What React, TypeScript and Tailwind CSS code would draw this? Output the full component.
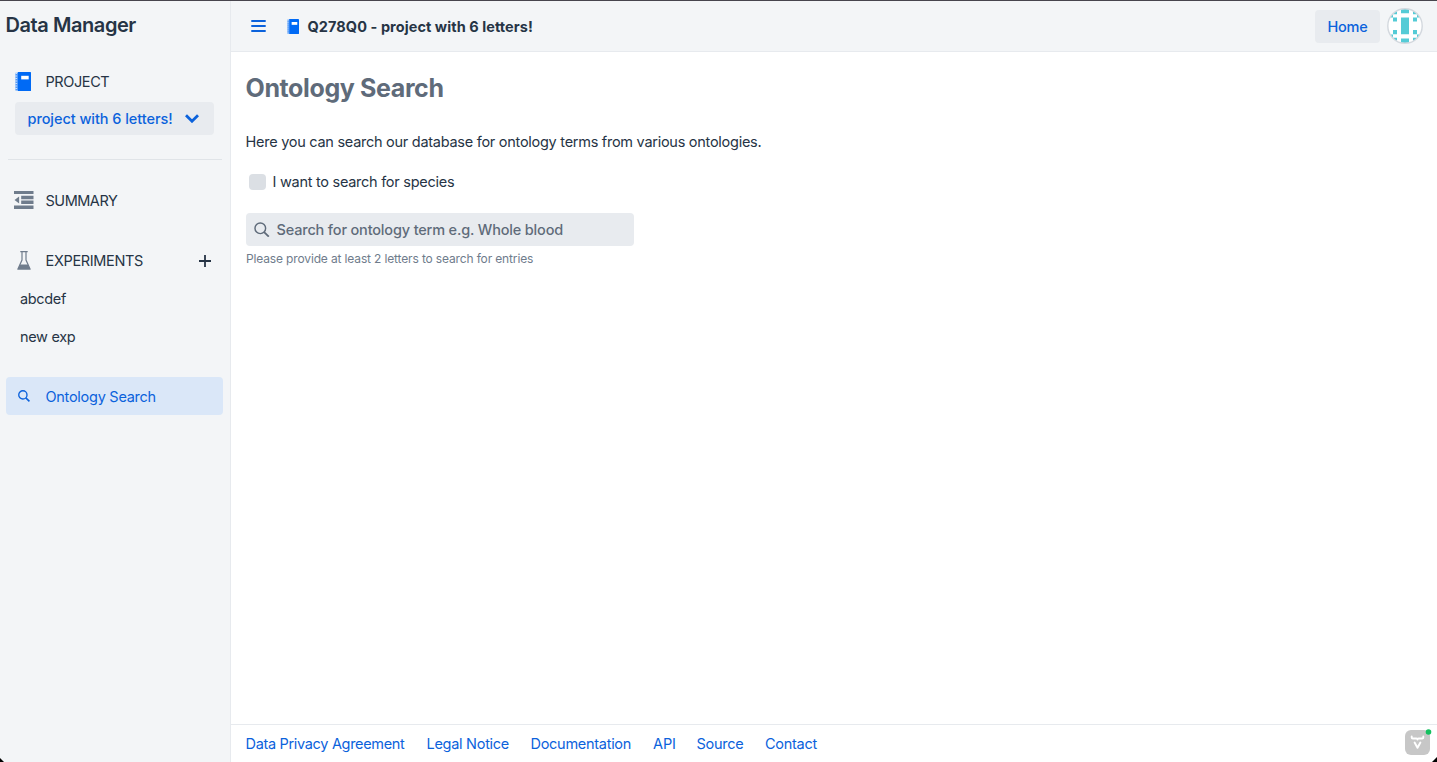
import React from "react";

function Notebook({ className }: { className: string }) {
  return (
    <svg viewBox="0 0 16 19" className={className} fill="#006af5" preserveAspectRatio="none">
      <path d="M2.800 0H15.500a.5.5 0 0 1 .5.5v18a.5.5 0 0 1-.5.5H2.800z" />
      <path d="M.4 .8h2.600v17.700H.4z" fill="#4f98f8" />
      <path d="M1.200 1v17.500" stroke="#cfe2fb" strokeWidth="1.800" strokeDasharray="1.100 1.400" fill="none" />
      <path fill="#fff" d="M6.200 3.800h7.500v3.600H6.200z" />
    </svg>
  );
}

function SearchIcon({ className, thick = 1.5 }: { className: string; thick?: number }) {
  return (
    <svg viewBox="0 0 16 16" className={className} fill="none" stroke="currentColor">
      <circle cx="6.5" cy="6.5" r="5.5" strokeWidth={thick} />
      <path d="M10.400 10.400l4.900 4.700" strokeWidth={thick + 0.4} />
    </svg>
  );
}

function Avatar() {
  return (
    <svg viewBox="0 0 36 36" className="h-9 w-9">
      <defs>
        <clipPath id="round"><circle cx="18" cy="18" r="17" /></clipPath>
      </defs>
      <circle cx="18" cy="18" r="17.2" fill="#fff" />
      <g clipPath="url(#round)" fill="#54cbd6">
        <path d="M14 1h8v4.200h-8zM14 9.500h8v16.800h-8zM14 30.600h8V35h-8z" />
        <path d="M5 1h5v5.200H6v3.200H1V5.200zM6 9.400h4v4.200H6zM6 22h4v4.200H6zM1 26.400h5v3.400h4V35H5z" />
        <path d="M31 1h-5v5.200h4v3.200h5V5.200zM26 9.400h4v4.200h-4zM26 22h4v4.200h-4zM35 26.400h-5v3.400h-4V35h5z" />
      </g>
      <circle cx="18" cy="18" r="17.2" fill="none" stroke="#d3d8de" strokeWidth="1.4" />
    </svg>
  );
}

function Sidebar() {
  return (
    <aside className="flex w-[231px] shrink-0 flex-col border-r border-[#e7eaee] bg-[#f3f5f7]">
      <h1 className="mt-[9px] pl-[5.5px] text-[20px] leading-[30px] font-semibold tracking-[-0.43px] whitespace-nowrap">Data Manager</h1>
      <div className="mt-[30px] flex h-[22px] items-center pl-[15px]">
        <Notebook className="h-[19px] w-4" />
        <span className="relative top-px ml-[14.500px] tracking-[-0.4px]">PROJECT</span>
      </div>
      <button className="mt-[10px] ml-[14.500px] flex h-[33px] w-[199.500px] items-center rounded-[4px] bg-[#e8ebef] pl-[13px] font-medium text-[#0b62dc]">
        <span className="w-[157px] text-left tracking-[-0.06px] whitespace-nowrap">project with 6 letters!</span>
        <svg viewBox="0 0 14 9" className="h-[9px] w-[14px]" fill="none" stroke="currentColor" strokeWidth="2.800">
          <path d="M1 1.200l6 6 6-6" />
        </svg>
      </button>
      <div className="mt-[24px] ml-2 h-px w-[213.500px] bg-[#e0e4e8]" />
      <div className="mt-[30px] flex h-[22px] items-center pl-[14px]">
        <svg viewBox="0 0 19 18" className="relative -top-px h-[18px] w-[19.500px]" fill="#6f7c8c" preserveAspectRatio="none">
          <path d="M0 0h19v3H0zM7 4.800h12v3.400H7zM7 9.600h12V13H7zM0 14.600h19V18H0zM5 5.500v7L.5 9z" />
        </svg>
        <span className="ml-[12px] tracking-[-0.48px]">SUMMARY</span>
      </div>
      <div className="mt-[38px] flex h-[22px] items-center pl-[17px]">
        <svg viewBox="0 0 14 19" className="relative -top-px h-[19px] w-[14px]" fill="none" stroke="#6f7c8c">
          <path d="M3.300.6h7.400M5 1v8L1 17.800h12L9 9V1" strokeWidth="1.200" />
          <path d="M3 13.400h8l2.400 5.100H.6z" fill="#6f7c8c" stroke="none" />
        </svg>
        <span className="ml-[14.500px] w-[153px] tracking-[-0.33px]">EXPERIMENTS</span>
        <svg viewBox="0 0 12 12" className="h-3 w-3" stroke="#263445" strokeWidth="1.800">
          <path d="M6 0v12M0 6h12" />
        </svg>
      </div>
      <a className="mt-[16px] pl-5 leading-[22px] tracking-[-0.33px]">abcdef</a>
      <a className="mt-[16px] pl-5 leading-[22px] tracking-[-0.33px]">new exp</a>
      <a className="mt-[29px] ml-[5.500px] flex h-[38px] w-[217.500px] items-center rounded-[4px] bg-[#dae7f8] pl-3 text-[#0b62dc]">
        <SearchIcon className="h-3 w-3" thick={1.8} />
        <span className="ml-4 pt-px tracking-[-0.27px]">Ontology Search</span>
      </a>
    </aside>
  );
}

function Header() {
  return (
    <header className="flex h-[51px] shrink-0 items-center border-b border-[#e7eaee] bg-[#f3f5f7] pl-5">
      <svg viewBox="0 0 15 12" className="h-3 w-[15px]" stroke="#0b62dc" strokeWidth="1.900" strokeLinecap="round">
        <path d="M1 1h13M1 6h13M1 11h13" />
      </svg>
      <Notebook className="ml-[21px] h-[15px] w-3" />
      <h2 className="ml-[8.500px] pt-px font-bold tracking-[0.07px] whitespace-nowrap">Q278Q0 - project with 6 letters!</h2>
      <button className="ml-auto h-[33px] w-[65px] rounded-[4px] bg-[#e8ebef] pt-px font-medium tracking-[-0.2px] text-[#0b62dc]">Home</button>
      <div className="mr-[14px] ml-[7px]"><Avatar /></div>
    </header>
  );
}

function Footer() {
  return (
    <footer className="relative flex h-[38px] shrink-0 items-center border-t border-[#e7eaee] pt-px pl-[14.500px] tracking-[-0.28px] whitespace-nowrap text-[#0b62dc]">
      <a className="w-[181px] tracking-[-0.32px]">Data Privacy Agreement</a>
      <a className="w-[104px]">Legal Notice</a>
      <a className="w-[122.500px]">Documentation</a>
      <a className="w-[43.500px] tracking-[-0.1px]">API</a>
      <a className="w-[68.500px]">Source</a>
      <a>Contact</a>
      <svg viewBox="0 0 29 28" className="absolute right-[4px] bottom-[6px] h-7 w-[29px]">
        <rect x="1" y="2" width="25" height="25" rx="6" fill="#c7c7c7" />
        <path d="M7.700 8.500v1q0 1 1.200 1h3.500q1.100 0 1.100 1.100 0-1.100 1.100-1.100h3.500q1.200 0 1.200-1v-1M10.600 14.500l2.900 5.300 2.900-5.300" fill="none" stroke="#fff" strokeWidth="1.900" strokeLinecap="round" strokeLinejoin="round" />
        <circle cx="24.500" cy="4" r="2.800" fill="#14c05f" />
      </svg>
    </footer>
  );
}

export default function App() {
  return (
    <div className="relative flex h-[762px] w-full flex-col overflow-hidden border-t border-[#47454d] bg-white font-['Inter',sans-serif] text-[14.500px] text-[#263445]">
      <div className="flex min-h-0 grow">
        <Sidebar />
        <div className="flex min-w-0 grow flex-col">
          <Header />
          <main className="flex grow flex-col items-start pl-[14.500px]">
            <h2 className="mt-[18px] text-[25px] leading-[36px] font-bold tracking-[-0.38px] text-[#5f6b7a]">Ontology Search</h2>
            <p className="mt-[25px] leading-[22px] tracking-[-0.268px]">Here you can search our database for ontology terms from various ontologies.</p>
            <label className="mt-[18px] flex h-[22px] items-center">
              <span className="ml-[3.500px] h-4 w-[17px] rounded-[4px] bg-[#dbdfe4]" />
              <span className="ml-[6.500px] tracking-[-0.27px]">I want to search for species</span>
            </label>
            <div className="mt-[20px] flex h-[33px] w-[388.500px] items-center rounded-[4px] bg-[#e8ebef] pl-[8.500px] font-medium text-[#5f6b7a]">
              <SearchIcon className="h-[15.5px] w-[15.5px]" />
              <span className="ml-[7px] tracking-[-0.17px]">Search for ontology term e.g. Whole blood</span>
            </div>
            <p className="mt-[4px] pl-[0.500px] text-[12px] leading-[18px] tracking-[-0.145px] text-[#6f7c8c]">Please provide at least 2 letters to search for entries</p>
          </main>
          <Footer />
        </div>
      </div>
      <svg viewBox="0 0 5 5" className="absolute bottom-0 left-0 h-[5px] w-[5px]"><path d="M0 1l4 4H0z" fill="#000" /></svg>
      <svg viewBox="0 0 5 5" className="absolute right-0 bottom-0 h-[5px] w-[5px]"><path d="M5 0v5H0z" fill="#000" /></svg>
    </div>
  );
}
